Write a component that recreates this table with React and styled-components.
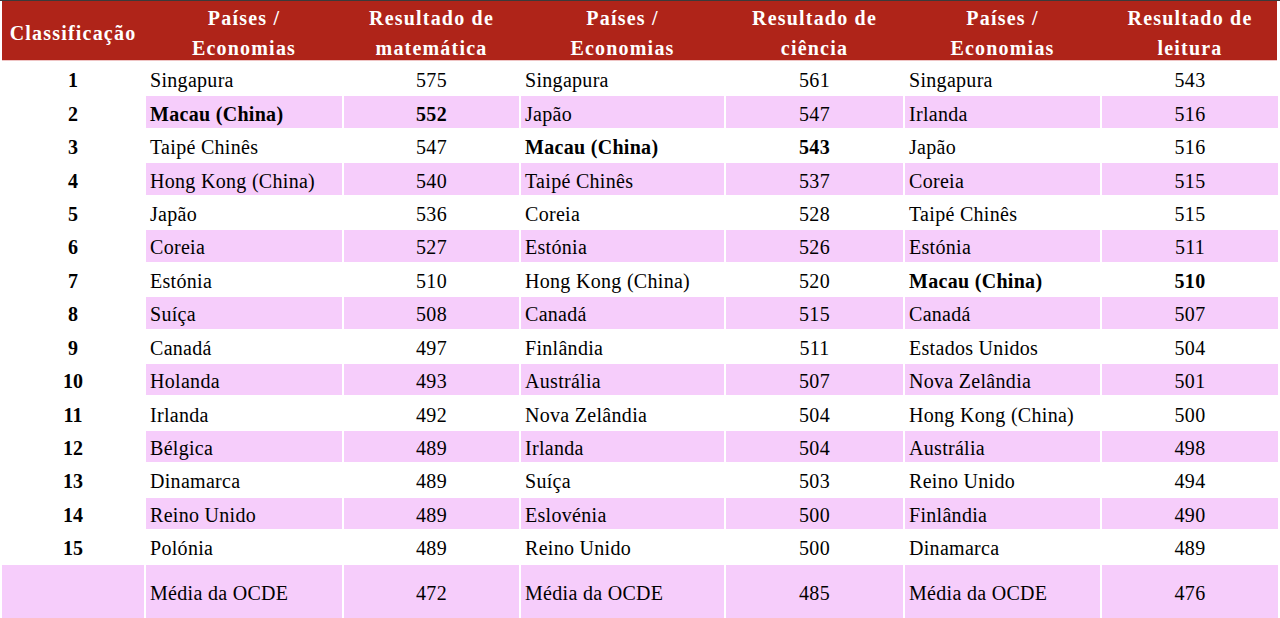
import React from "react";
import styled, { createGlobalStyle } from "styled-components";

const GlobalStyle = createGlobalStyle`
  body {
    margin: 0;
    background: #ffffff;
    font-family: "Liberation Serif", "Times New Roman", serif;
  }
`;

const COLS = "142px 196px 175px 203px 177px 195px 176px";

const Page = styled.div`
  width: 1280px;
  height: 618px;
  border-top: 1px solid #3a3a3a;
  box-sizing: border-box;
  overflow: hidden;
`;

const Header = styled.div`
  display: grid;
  grid-template-columns: ${COLS};
  column-gap: 2px;
  margin-left: 2px;
  width: 1275px;
  height: 59px;
  background: #af2419;
  border-bottom: 1px solid #efc4c4;
`;

const HeadCell = styled.div`
  display: flex;
  align-items: center;
  justify-content: center;
  padding-top: 2px;
  box-sizing: border-box;
  text-align: center;
  color: #ffffff;
  font-weight: bold;
  font-size: 20px;
  line-height: 30px;
  letter-spacing: 1.2px;
`;

const Body = styled.div`
  display: grid;
  grid-template-columns: ${COLS};
  grid-auto-rows: 31.45px;
  gap: 2px;
  margin: 2px 0 0 2px;
`;

const Cell = styled.div`
  display: flex;
  align-items: center;
  justify-content: ${(p) => (p.$left ? "flex-start" : "center")};
  padding-left: ${(p) => (p.$left ? "4px" : "0")};
  padding-top: 4px;
  box-sizing: border-box;
  background: ${(p) => (p.$shade ? "#f6cdfb" : "transparent")};
  font-size: 20px;
  font-weight: ${(p) => (p.$bold ? "bold" : "normal")};
  letter-spacing: 0.3px;
  color: #000;
  white-space: nowrap;
  ${(p) => (p.$tall ? "height: 53px; padding-top: 5px;" : "")}
`;

const Rank = styled(Cell)`
  font-weight: bold;
  letter-spacing: 0;
`;

const headers = [
  ["Classificação"],
  ["Países /", "Economias"],
  ["Resultado de", "matemática"],
  ["Países /", "Economias"],
  ["Resultado de", "ciência"],
  ["Países /", "Economias"],
  ["Resultado de", "leitura"],
];

const MACAU = "Macau (China)";

const rows = [
  ["Singapura", 575, "Singapura", 561, "Singapura", 543],
  [MACAU, 552, "Japão", 547, "Irlanda", 516],
  ["Taipé Chinês", 547, MACAU, 543, "Japão", 516],
  ["Hong Kong (China)", 540, "Taipé Chinês", 537, "Coreia", 515],
  ["Japão", 536, "Coreia", 528, "Taipé Chinês", 515],
  ["Coreia", 527, "Estónia", 526, "Estónia", 511],
  ["Estónia", 510, "Hong Kong (China)", 520, MACAU, 510],
  ["Suíça", 508, "Canadá", 515, "Canadá", 507],
  ["Canadá", 497, "Finlândia", 511, "Estados Unidos", 504],
  ["Holanda", 493, "Austrália", 507, "Nova Zelândia", 501],
  ["Irlanda", 492, "Nova Zelândia", 504, "Hong Kong (China)", 500],
  ["Bélgica", 489, "Irlanda", 504, "Austrália", 498],
  ["Dinamarca", 489, "Suíça", 503, "Reino Unido", 494],
  ["Reino Unido", 489, "Eslovénia", 500, "Finlândia", 490],
  ["Polónia", 489, "Reino Unido", 500, "Dinamarca", 489],
];

const average = ["Média da OCDE", 472, "Média da OCDE", 485, "Média da OCDE", 476];

const App = () => {
  return (
    <Page>
      <GlobalStyle />
      <Header>
        {headers.map((lines, i) => (
          <HeadCell key={i}>
            <div>
              {lines.map((l) => (
                <div key={l}>{l}</div>
              ))}
            </div>
          </HeadCell>
        ))}
      </Header>
      <Body>
        {rows.map((r, i) => {
          const shade = i % 2 === 1;
          return (
            <React.Fragment key={i}>
              <Rank>{i + 1}</Rank>
              {[0, 2, 4].map((j) => {
                const bold = r[j] === MACAU;
                return (
                  <React.Fragment key={j}>
                    <Cell $left $shade={shade} $bold={bold}>
                      {r[j]}
                    </Cell>
                    <Cell $shade={shade} $bold={bold}>
                      {r[j + 1]}
                    </Cell>
                  </React.Fragment>
                );
              })}
            </React.Fragment>
          );
        })}
        <Cell $shade $tall />
        {[0, 2, 4].map((j) => (
          <React.Fragment key={j}>
            <Cell $left $shade $tall>
              {average[j]}
            </Cell>
            <Cell $shade $tall>
              {average[j + 1]}
            </Cell>
          </React.Fragment>
        ))}
      </Body>
    </Page>
  );
};

export default App;
